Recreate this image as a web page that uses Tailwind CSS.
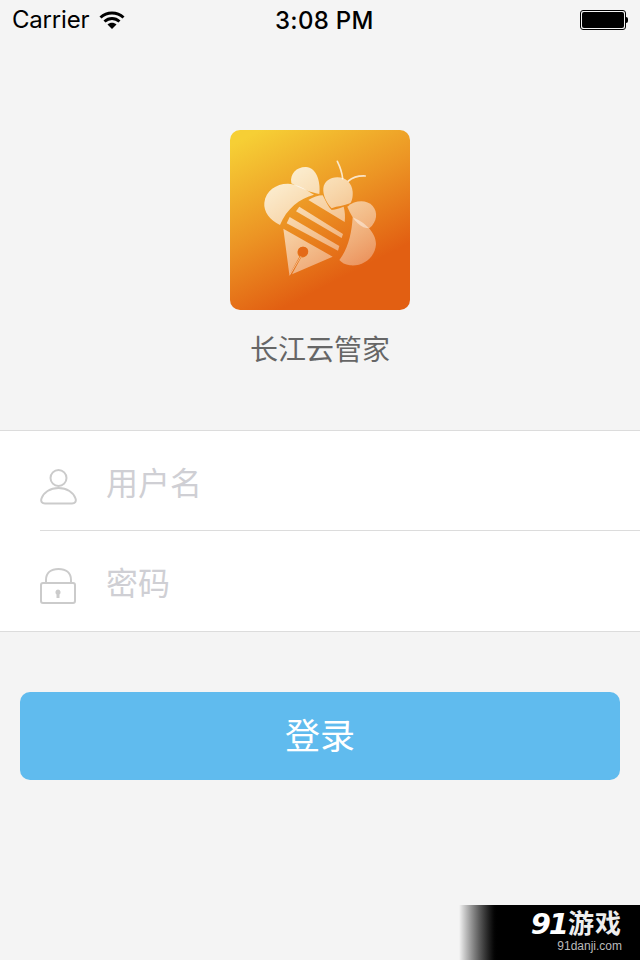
<!DOCTYPE html>
<html lang="en">

<head>
  <meta charset="UTF-8">
  <meta name="viewport" content="width=device-width, initial-scale=1.0">
  <title>长江云管家</title>
  <script src="https://cdn.jsdelivr.net/npm/@tailwindcss/browser@4"></script>
</head>

<body class="bg-[#f4f4f4]">
  <div class="relative h-[960px] w-[640px] overflow-hidden bg-[#f4f4f4] font-['Liberation_Sans','Noto_Sans_CJK_SC',sans-serif]">

    <!-- Status bar -->
    <div class="flex h-10 items-center justify-between pl-[12px] pr-[12px] text-black">
      <div class="flex items-center gap-[10px] font-['Inter','Liberation_Sans',sans-serif] text-[24px] leading-none">
        <span class="tracking-[-0.2px]">Carrier</span>
        <svg width="26" height="20" viewBox="0 0 26 20" fill="none" stroke="#000" stroke-width="3">
          <path d="M1.500 7.500C8 1.500 18 1.500 24.500 7.500" />
          <path d="M5.500 11.500C10 7.500 16 7.500 20.500 11.500" />
          <path d="M13 19L8.500 14.500C11 12.300 15 12.300 17.500 14.500Z" fill="#000" stroke="none" />
        </svg>
      </div>
      <span class="absolute left-[275px] top-[8px] font-['Inter','Liberation_Sans',sans-serif] text-[24px] font-medium leading-[26px] tracking-[0.3px]">3:08 PM</span>
      <div class="flex items-center">
        <div class="h-[20px] w-[46px] rounded-[3px] border border-black p-[1px]">
          <div class="h-full w-full rounded-[2px] bg-black"></div>
        </div>
        <div class="h-[6px] w-[2px] rounded-r-full bg-black"></div>
      </div>
    </div>

    <!-- Logo -->
    <div class="mt-[90px] flex flex-col items-center">
      <div class="size-[180px] overflow-hidden rounded-[10px]">
        <svg width="180" height="180" viewBox="30 30 540 540">
          <defs>
            <linearGradient id="bg" gradientUnits="userSpaceOnUse" x1="100" y1="40" x2="332" y2="491">
              <stop offset="0" stop-color="#f6cf35" />
              <stop offset="0.55" stop-color="#ec9424" />
              <stop offset="1" stop-color="#e25f12" />
            </linearGradient>
            <linearGradient id="beeFill" gradientUnits="userSpaceOnUse" x1="200" y1="140" x2="420" y2="460">
              <stop offset="0" stop-color="#fff" stop-opacity="0.8" />
              <stop offset="1" stop-color="#fff" stop-opacity="0.3" />
            </linearGradient>
          </defs>
          <rect x="30" y="30" width="540" height="540" fill="url(#bg)" />
          <g fill="url(#beeFill)">
            <!-- wings -->
            <path d="M214 190C208 160 232 140 258 141C288 143 302 180 298 222C270 218 240 204 214 190Z" />
            <path d="M180 315C150 300 130 275 133 248C137 212 170 190 205 191C238 193 262 212 282 224C240 235 200 265 180 315Z" />
            <path d="M382 260C405 240 440 238 458 258C474 276 472 305 448 325C425 325 400 305 382 260Z" />
            <path d="M398 292C430 305 468 335 468 372C466 412 430 440 390 436C375 434 365 428 358 420C385 385 395 340 398 292Z" />
            <!-- head -->
            <path d="M335 265C320 250 308 225 310 205C312 185 330 172 352 172C378 172 396 190 398 215C399 230 396 245 390 250C372 258 352 258 335 265Z" />
            <!-- body stripes -->
            <path d="M265 240C280 232 295 226 308 226C318 245 326 262 335 270C348 268 360 264 371 260C375 275 376 290 374 306Z" />
            <path d="M238 260L369 342L365 354L228 274Z" />
            <path d="M209 291L358 378L354 392L200 310Z" />
            <!-- nib -->
            <path d="M190 326L338 410L216 463L244 412C256 414 268 402 264 390C260 378 240 376 234 390C230 398 234 406 238 410L208 464Z" />
            <circle cx="249" cy="395" r="15" fill="#e46a18" />
          </g>
          <g fill="none" stroke="#fff" stroke-opacity="0.75" stroke-linecap="round">
            <path d="M368 176C366 155 360 140 352 124" stroke-width="5" />
            <path d="M385 183C398 172 416 167 436 168" stroke-width="5" />
            <path d="M242 410L209 465" stroke-width="2" />
          </g>
        </svg>
      </div>
      <p class="mt-[21px] text-[28px] leading-[40px] text-[#666]">长江云管家</p>
    </div>

    <!-- Login form -->
    <div class="mt-[59px] border-y border-[#dcdcdc] bg-white">
      <div class="ml-[40px] flex h-[100px] items-start gap-[29px] border-b border-[#dcdcdc] pt-[37px]">
        <svg width="37" height="37" viewBox="0 0 37 37" fill="none" stroke="#cbcbcb" stroke-width="2">
          <circle cx="18.500" cy="10" r="8" />
          <path d="M5 35.500C2 35.500 0.500 33.500 1.500 30.500C3.500 24.500 10 20 18.500 20C27 20 33.500 24.500 35.500 30.500C36.500 33.500 35 35.500 32 35.500Z" />
        </svg>
        <span class="text-[32px] leading-none text-[#cfcfd4]">用户名</span>
      </div>
      <div class="ml-[40px] flex h-[100px] items-start gap-[29px] pt-[37px]">
        <svg width="37" height="37" viewBox="0 0 37 37" fill="none" stroke="#cbcbcb" stroke-width="2">
          <path d="M6 15V12C6 5 11 1 18.500 1C26 1 31 5 31 12V15" />
          <rect x="1" y="15" width="34" height="20" rx="2" />
          <path d="M18 21.500a2.800 2.800 0 0 1 1.500 5V30h-3v-3.500a2.800 2.800 0 0 1 1.500-5Z" fill="#cbcbcb" stroke="none" />
        </svg>
        <span class="text-[32px] leading-none text-[#cfcfd4]">密码</span>
      </div>
    </div>

    <button class="mx-[20px] mt-[60px] flex h-[88px] w-[600px] items-center justify-center rounded-[10px] bg-[#60bbee] pt-[3px] text-[35px] text-white">登录</button>

    <!-- Watermark -->
    <div class="absolute bottom-0 right-0 flex h-[55px] w-[181px] flex-col items-end bg-linear-to-r from-[#f4f4f4] from-0% via-black via-[22%] to-black pr-[18px] pt-[3px] text-white">
      <div class="flex items-center gap-[1px] leading-none">
        <span class="font-['DejaVu_Sans',sans-serif] text-[29px] font-bold italic leading-[32px] tracking-[-2px]">91</span>
        <span class="text-[26px] font-bold leading-[32px] tracking-[1px] text-[#eee]">游戏</span>
      </div>
      <span class="text-[12px] leading-[13px] text-[#bbb]">91danji.com</span>
    </div>
  </div>
</body>

</html>
